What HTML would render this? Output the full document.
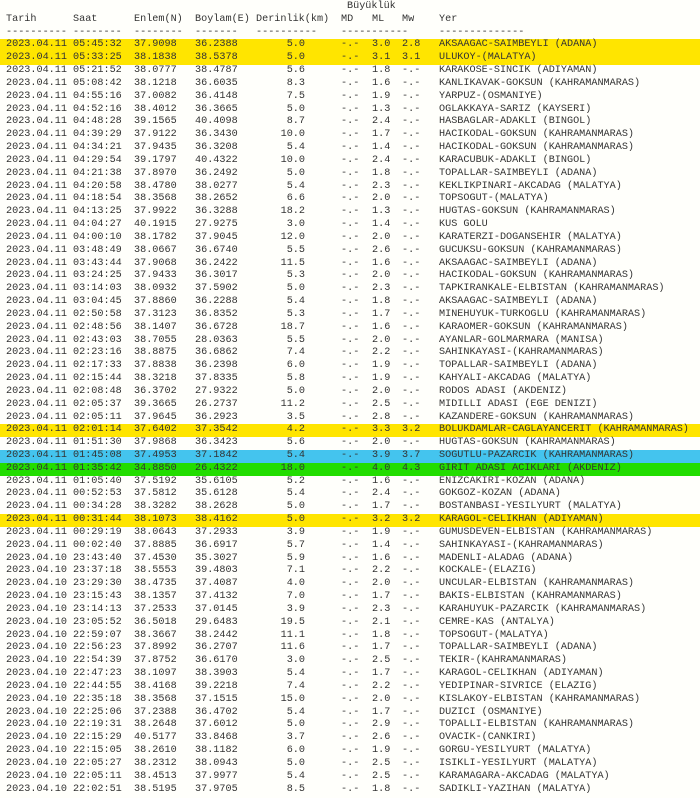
<!DOCTYPE html>
<html><head><meta charset="utf-8"><style>
html,body{margin:0;padding:0;background:#fffffb;width:700px;height:798px;overflow:hidden}
#t{position:absolute;top:1px;left:0;width:700px;font-family:"Liberation Mono",monospace;font-size:10.17px;line-height:12.83px;color:#333}
#t div{height:12.83px;position:relative}
#t span{position:absolute;top:0;white-space:nowrap}
.Y{background:#ffe500}.B{background:#44c4ee}.G{background:#22dd00}
.a{left:6px}.b{left:73px}.c{left:134px}.d{left:195px}.e{left:235px;width:70px;text-align:right}.f{left:341px}.g{left:372px}.h{left:402px}.i{left:439px}.k{left:256px}.m{left:347px}
</style></head><body><div id="t">
<div><span class="m">Büyüklük</span></div>
<div><span class="a">Tarih</span><span class="b">Saat</span><span class="c">Enlem(N)</span><span class="d">Boylam(E)</span><span class="k">Derinlik(km)</span><span class="f">MD</span><span class="g">ML</span><span class="h">Mw</span><span class="i">Yer</span></div>
<div><span class="a">----------</span><span class="b">--------</span><span class="c">--------</span><span class="d">-------</span><span class="k">----------</span><span class="f">-----------</span><span class="i">--------------</span></div>
<div class="Y"><span class="a">2023.04.11</span><span class="b">05:45:32</span><span class="c">37.9098</span><span class="d">36.2388</span><span class="e">5.0</span><span class="f">-.-</span><span class="g">3.0</span><span class="h">2.8</span><span class="i">AKSAAGAC-SAIMBEYLI (ADANA)</span></div>
<div class="Y"><span class="a">2023.04.11</span><span class="b">05:33:25</span><span class="c">38.1838</span><span class="d">38.5378</span><span class="e">5.0</span><span class="f">-.-</span><span class="g">3.1</span><span class="h">3.1</span><span class="i">ULUKOY-(MALATYA)</span></div>
<div><span class="a">2023.04.11</span><span class="b">05:21:52</span><span class="c">38.0777</span><span class="d">38.4787</span><span class="e">5.6</span><span class="f">-.-</span><span class="g">1.8</span><span class="h">-.-</span><span class="i">KARAKOSE-SINCIK (ADIYAMAN)</span></div>
<div><span class="a">2023.04.11</span><span class="b">05:08:42</span><span class="c">38.1218</span><span class="d">36.6035</span><span class="e">8.3</span><span class="f">-.-</span><span class="g">1.6</span><span class="h">-.-</span><span class="i">KANLIKAVAK-GOKSUN (KAHRAMANMARAS)</span></div>
<div><span class="a">2023.04.11</span><span class="b">04:55:16</span><span class="c">37.0082</span><span class="d">36.4148</span><span class="e">7.5</span><span class="f">-.-</span><span class="g">1.9</span><span class="h">-.-</span><span class="i">YARPUZ-(OSMANIYE)</span></div>
<div><span class="a">2023.04.11</span><span class="b">04:52:16</span><span class="c">38.4012</span><span class="d">36.3665</span><span class="e">5.0</span><span class="f">-.-</span><span class="g">1.3</span><span class="h">-.-</span><span class="i">OGLAKKAYA-SARIZ (KAYSERI)</span></div>
<div><span class="a">2023.04.11</span><span class="b">04:48:28</span><span class="c">39.1565</span><span class="d">40.4098</span><span class="e">8.7</span><span class="f">-.-</span><span class="g">2.4</span><span class="h">-.-</span><span class="i">HASBAGLAR-ADAKLI (BINGOL)</span></div>
<div><span class="a">2023.04.11</span><span class="b">04:39:29</span><span class="c">37.9122</span><span class="d">36.3430</span><span class="e">10.0</span><span class="f">-.-</span><span class="g">1.7</span><span class="h">-.-</span><span class="i">HACIKODAL-GOKSUN (KAHRAMANMARAS)</span></div>
<div><span class="a">2023.04.11</span><span class="b">04:34:21</span><span class="c">37.9435</span><span class="d">36.3208</span><span class="e">5.4</span><span class="f">-.-</span><span class="g">1.4</span><span class="h">-.-</span><span class="i">HACIKODAL-GOKSUN (KAHRAMANMARAS)</span></div>
<div><span class="a">2023.04.11</span><span class="b">04:29:54</span><span class="c">39.1797</span><span class="d">40.4322</span><span class="e">10.0</span><span class="f">-.-</span><span class="g">2.4</span><span class="h">-.-</span><span class="i">KARACUBUK-ADAKLI (BINGOL)</span></div>
<div><span class="a">2023.04.11</span><span class="b">04:21:38</span><span class="c">37.8970</span><span class="d">36.2492</span><span class="e">5.0</span><span class="f">-.-</span><span class="g">1.8</span><span class="h">-.-</span><span class="i">TOPALLAR-SAIMBEYLI (ADANA)</span></div>
<div><span class="a">2023.04.11</span><span class="b">04:20:58</span><span class="c">38.4780</span><span class="d">38.0277</span><span class="e">5.4</span><span class="f">-.-</span><span class="g">2.3</span><span class="h">-.-</span><span class="i">KEKLIKPINARI-AKCADAG (MALATYA)</span></div>
<div><span class="a">2023.04.11</span><span class="b">04:18:54</span><span class="c">38.3568</span><span class="d">38.2652</span><span class="e">6.6</span><span class="f">-.-</span><span class="g">2.0</span><span class="h">-.-</span><span class="i">TOPSOGUT-(MALATYA)</span></div>
<div><span class="a">2023.04.11</span><span class="b">04:13:25</span><span class="c">37.9922</span><span class="d">36.3288</span><span class="e">18.2</span><span class="f">-.-</span><span class="g">1.3</span><span class="h">-.-</span><span class="i">HUGTAS-GOKSUN (KAHRAMANMARAS)</span></div>
<div><span class="a">2023.04.11</span><span class="b">04:04:27</span><span class="c">40.1915</span><span class="d">27.9275</span><span class="e">3.0</span><span class="f">-.-</span><span class="g">1.4</span><span class="h">-.-</span><span class="i">KUS GOLU</span></div>
<div><span class="a">2023.04.11</span><span class="b">04:00:10</span><span class="c">38.1782</span><span class="d">37.9045</span><span class="e">12.0</span><span class="f">-.-</span><span class="g">2.0</span><span class="h">-.-</span><span class="i">KARATERZI-DOGANSEHIR (MALATYA)</span></div>
<div><span class="a">2023.04.11</span><span class="b">03:48:49</span><span class="c">38.0667</span><span class="d">36.6740</span><span class="e">5.5</span><span class="f">-.-</span><span class="g">2.6</span><span class="h">-.-</span><span class="i">GUCUKSU-GOKSUN (KAHRAMANMARAS)</span></div>
<div><span class="a">2023.04.11</span><span class="b">03:43:44</span><span class="c">37.9068</span><span class="d">36.2422</span><span class="e">11.5</span><span class="f">-.-</span><span class="g">1.6</span><span class="h">-.-</span><span class="i">AKSAAGAC-SAIMBEYLI (ADANA)</span></div>
<div><span class="a">2023.04.11</span><span class="b">03:24:25</span><span class="c">37.9433</span><span class="d">36.3017</span><span class="e">5.3</span><span class="f">-.-</span><span class="g">2.0</span><span class="h">-.-</span><span class="i">HACIKODAL-GOKSUN (KAHRAMANMARAS)</span></div>
<div><span class="a">2023.04.11</span><span class="b">03:14:03</span><span class="c">38.0932</span><span class="d">37.5902</span><span class="e">5.0</span><span class="f">-.-</span><span class="g">2.3</span><span class="h">-.-</span><span class="i">TAPKIRANKALE-ELBISTAN (KAHRAMANMARAS)</span></div>
<div><span class="a">2023.04.11</span><span class="b">03:04:45</span><span class="c">37.8860</span><span class="d">36.2288</span><span class="e">5.4</span><span class="f">-.-</span><span class="g">1.8</span><span class="h">-.-</span><span class="i">AKSAAGAC-SAIMBEYLI (ADANA)</span></div>
<div><span class="a">2023.04.11</span><span class="b">02:50:58</span><span class="c">37.3123</span><span class="d">36.8352</span><span class="e">5.3</span><span class="f">-.-</span><span class="g">1.7</span><span class="h">-.-</span><span class="i">MINEHUYUK-TURKOGLU (KAHRAMANMARAS)</span></div>
<div><span class="a">2023.04.11</span><span class="b">02:48:56</span><span class="c">38.1407</span><span class="d">36.6728</span><span class="e">18.7</span><span class="f">-.-</span><span class="g">1.6</span><span class="h">-.-</span><span class="i">KARAOMER-GOKSUN (KAHRAMANMARAS)</span></div>
<div><span class="a">2023.04.11</span><span class="b">02:43:03</span><span class="c">38.7055</span><span class="d">28.0363</span><span class="e">5.5</span><span class="f">-.-</span><span class="g">2.0</span><span class="h">-.-</span><span class="i">AYANLAR-GOLMARMARA (MANISA)</span></div>
<div><span class="a">2023.04.11</span><span class="b">02:23:16</span><span class="c">38.8875</span><span class="d">36.6862</span><span class="e">7.4</span><span class="f">-.-</span><span class="g">2.2</span><span class="h">-.-</span><span class="i">SAHINKAYASI-(KAHRAMANMARAS)</span></div>
<div><span class="a">2023.04.11</span><span class="b">02:17:33</span><span class="c">37.8838</span><span class="d">36.2398</span><span class="e">6.0</span><span class="f">-.-</span><span class="g">1.9</span><span class="h">-.-</span><span class="i">TOPALLAR-SAIMBEYLI (ADANA)</span></div>
<div><span class="a">2023.04.11</span><span class="b">02:15:44</span><span class="c">38.3218</span><span class="d">37.8335</span><span class="e">5.8</span><span class="f">-.-</span><span class="g">1.9</span><span class="h">-.-</span><span class="i">KAHYALI-AKCADAG (MALATYA)</span></div>
<div><span class="a">2023.04.11</span><span class="b">02:08:48</span><span class="c">36.3702</span><span class="d">27.9322</span><span class="e">5.0</span><span class="f">-.-</span><span class="g">2.0</span><span class="h">-.-</span><span class="i">RODOS ADASI (AKDENIZ)</span></div>
<div><span class="a">2023.04.11</span><span class="b">02:05:37</span><span class="c">39.3665</span><span class="d">26.2737</span><span class="e">11.2</span><span class="f">-.-</span><span class="g">2.5</span><span class="h">-.-</span><span class="i">MIDILLI ADASI (EGE DENIZI)</span></div>
<div><span class="a">2023.04.11</span><span class="b">02:05:11</span><span class="c">37.9645</span><span class="d">36.2923</span><span class="e">3.5</span><span class="f">-.-</span><span class="g">2.8</span><span class="h">-.-</span><span class="i">KAZANDERE-GOKSUN (KAHRAMANMARAS)</span></div>
<div class="Y"><span class="a">2023.04.11</span><span class="b">02:01:14</span><span class="c">37.6402</span><span class="d">37.3542</span><span class="e">4.2</span><span class="f">-.-</span><span class="g">3.3</span><span class="h">3.2</span><span class="i">BOLUKDAMLAR-CAGLAYANCERIT (KAHRAMANMARAS)</span></div>
<div><span class="a">2023.04.11</span><span class="b">01:51:30</span><span class="c">37.9868</span><span class="d">36.3423</span><span class="e">5.6</span><span class="f">-.-</span><span class="g">2.0</span><span class="h">-.-</span><span class="i">HUGTAS-GOKSUN (KAHRAMANMARAS)</span></div>
<div class="B"><span class="a">2023.04.11</span><span class="b">01:45:08</span><span class="c">37.4953</span><span class="d">37.1842</span><span class="e">5.4</span><span class="f">-.-</span><span class="g">3.9</span><span class="h">3.7</span><span class="i">SOGUTLU-PAZARCIK (KAHRAMANMARAS)</span></div>
<div class="G"><span class="a">2023.04.11</span><span class="b">01:35:42</span><span class="c">34.8850</span><span class="d">26.4322</span><span class="e">18.0</span><span class="f">-.-</span><span class="g">4.0</span><span class="h">4.3</span><span class="i">GIRIT ADASI ACIKLARI (AKDENIZ)</span></div>
<div><span class="a">2023.04.11</span><span class="b">01:05:40</span><span class="c">37.5192</span><span class="d">35.6105</span><span class="e">5.2</span><span class="f">-.-</span><span class="g">1.6</span><span class="h">-.-</span><span class="i">ENIZCAKIRI-KOZAN (ADANA)</span></div>
<div><span class="a">2023.04.11</span><span class="b">00:52:53</span><span class="c">37.5812</span><span class="d">35.6128</span><span class="e">5.4</span><span class="f">-.-</span><span class="g">2.4</span><span class="h">-.-</span><span class="i">GOKGOZ-KOZAN (ADANA)</span></div>
<div><span class="a">2023.04.11</span><span class="b">00:34:28</span><span class="c">38.3282</span><span class="d">38.2628</span><span class="e">5.0</span><span class="f">-.-</span><span class="g">1.7</span><span class="h">-.-</span><span class="i">BOSTANBASI-YESILYURT (MALATYA)</span></div>
<div class="Y"><span class="a">2023.04.11</span><span class="b">00:31:44</span><span class="c">38.1073</span><span class="d">38.4162</span><span class="e">5.0</span><span class="f">-.-</span><span class="g">3.2</span><span class="h">3.2</span><span class="i">KARAGOL-CELIKHAN (ADIYAMAN)</span></div>
<div><span class="a">2023.04.11</span><span class="b">00:29:19</span><span class="c">38.0643</span><span class="d">37.2933</span><span class="e">3.9</span><span class="f">-.-</span><span class="g">1.9</span><span class="h">-.-</span><span class="i">GUMUSDEVEN-ELBISTAN (KAHRAMANMARAS)</span></div>
<div><span class="a">2023.04.11</span><span class="b">00:02:40</span><span class="c">37.8885</span><span class="d">36.6917</span><span class="e">5.7</span><span class="f">-.-</span><span class="g">1.4</span><span class="h">-.-</span><span class="i">SAHINKAYASI-(KAHRAMANMARAS)</span></div>
<div><span class="a">2023.04.10</span><span class="b">23:43:40</span><span class="c">37.4530</span><span class="d">35.3027</span><span class="e">5.9</span><span class="f">-.-</span><span class="g">1.6</span><span class="h">-.-</span><span class="i">MADENLI-ALADAG (ADANA)</span></div>
<div><span class="a">2023.04.10</span><span class="b">23:37:18</span><span class="c">38.5553</span><span class="d">39.4803</span><span class="e">7.1</span><span class="f">-.-</span><span class="g">2.2</span><span class="h">-.-</span><span class="i">KOCKALE-(ELAZIG)</span></div>
<div><span class="a">2023.04.10</span><span class="b">23:29:30</span><span class="c">38.4735</span><span class="d">37.4087</span><span class="e">4.0</span><span class="f">-.-</span><span class="g">2.0</span><span class="h">-.-</span><span class="i">UNCULAR-ELBISTAN (KAHRAMANMARAS)</span></div>
<div><span class="a">2023.04.10</span><span class="b">23:15:43</span><span class="c">38.1357</span><span class="d">37.4132</span><span class="e">7.0</span><span class="f">-.-</span><span class="g">1.7</span><span class="h">-.-</span><span class="i">BAKIS-ELBISTAN (KAHRAMANMARAS)</span></div>
<div><span class="a">2023.04.10</span><span class="b">23:14:13</span><span class="c">37.2533</span><span class="d">37.0145</span><span class="e">3.9</span><span class="f">-.-</span><span class="g">2.3</span><span class="h">-.-</span><span class="i">KARAHUYUK-PAZARCIK (KAHRAMANMARAS)</span></div>
<div><span class="a">2023.04.10</span><span class="b">23:05:52</span><span class="c">36.5018</span><span class="d">29.6483</span><span class="e">19.5</span><span class="f">-.-</span><span class="g">2.1</span><span class="h">-.-</span><span class="i">CEMRE-KAS (ANTALYA)</span></div>
<div><span class="a">2023.04.10</span><span class="b">22:59:07</span><span class="c">38.3667</span><span class="d">38.2442</span><span class="e">11.1</span><span class="f">-.-</span><span class="g">1.8</span><span class="h">-.-</span><span class="i">TOPSOGUT-(MALATYA)</span></div>
<div><span class="a">2023.04.10</span><span class="b">22:56:23</span><span class="c">37.8992</span><span class="d">36.2707</span><span class="e">11.6</span><span class="f">-.-</span><span class="g">1.7</span><span class="h">-.-</span><span class="i">TOPALLAR-SAIMBEYLI (ADANA)</span></div>
<div><span class="a">2023.04.10</span><span class="b">22:54:39</span><span class="c">37.8752</span><span class="d">36.6170</span><span class="e">3.0</span><span class="f">-.-</span><span class="g">2.5</span><span class="h">-.-</span><span class="i">TEKIR-(KAHRAMANMARAS)</span></div>
<div><span class="a">2023.04.10</span><span class="b">22:47:23</span><span class="c">38.1097</span><span class="d">38.3903</span><span class="e">5.4</span><span class="f">-.-</span><span class="g">1.7</span><span class="h">-.-</span><span class="i">KARAGOL-CELIKHAN (ADIYAMAN)</span></div>
<div><span class="a">2023.04.10</span><span class="b">22:44:55</span><span class="c">38.4168</span><span class="d">39.2218</span><span class="e">7.4</span><span class="f">-.-</span><span class="g">2.2</span><span class="h">-.-</span><span class="i">YEDIPINAR-SIVRICE (ELAZIG)</span></div>
<div><span class="a">2023.04.10</span><span class="b">22:35:18</span><span class="c">38.3568</span><span class="d">37.1515</span><span class="e">15.0</span><span class="f">-.-</span><span class="g">2.0</span><span class="h">-.-</span><span class="i">KISLAKOY-ELBISTAN (KAHRAMANMARAS)</span></div>
<div><span class="a">2023.04.10</span><span class="b">22:25:06</span><span class="c">37.2388</span><span class="d">36.4702</span><span class="e">5.4</span><span class="f">-.-</span><span class="g">1.7</span><span class="h">-.-</span><span class="i">DUZICI (OSMANIYE)</span></div>
<div><span class="a">2023.04.10</span><span class="b">22:19:31</span><span class="c">38.2648</span><span class="d">37.6012</span><span class="e">5.0</span><span class="f">-.-</span><span class="g">2.9</span><span class="h">-.-</span><span class="i">TOPALLI-ELBISTAN (KAHRAMANMARAS)</span></div>
<div><span class="a">2023.04.10</span><span class="b">22:15:29</span><span class="c">40.5177</span><span class="d">33.8468</span><span class="e">3.7</span><span class="f">-.-</span><span class="g">2.6</span><span class="h">-.-</span><span class="i">OVACIK-(CANKIRI)</span></div>
<div><span class="a">2023.04.10</span><span class="b">22:15:05</span><span class="c">38.2610</span><span class="d">38.1182</span><span class="e">6.0</span><span class="f">-.-</span><span class="g">1.9</span><span class="h">-.-</span><span class="i">GORGU-YESILYURT (MALATYA)</span></div>
<div><span class="a">2023.04.10</span><span class="b">22:05:27</span><span class="c">38.2312</span><span class="d">38.0943</span><span class="e">5.0</span><span class="f">-.-</span><span class="g">2.5</span><span class="h">-.-</span><span class="i">ISIKLI-YESILYURT (MALATYA)</span></div>
<div><span class="a">2023.04.10</span><span class="b">22:05:11</span><span class="c">38.4513</span><span class="d">37.9977</span><span class="e">5.4</span><span class="f">-.-</span><span class="g">2.5</span><span class="h">-.-</span><span class="i">KARAMAGARA-AKCADAG (MALATYA)</span></div>
<div><span class="a">2023.04.10</span><span class="b">22:02:51</span><span class="c">38.5195</span><span class="d">37.9705</span><span class="e">8.5</span><span class="f">-.-</span><span class="g">1.8</span><span class="h">-.-</span><span class="i">SADIKLI-YAZIHAN (MALATYA)</span></div>
</div></body></html>
